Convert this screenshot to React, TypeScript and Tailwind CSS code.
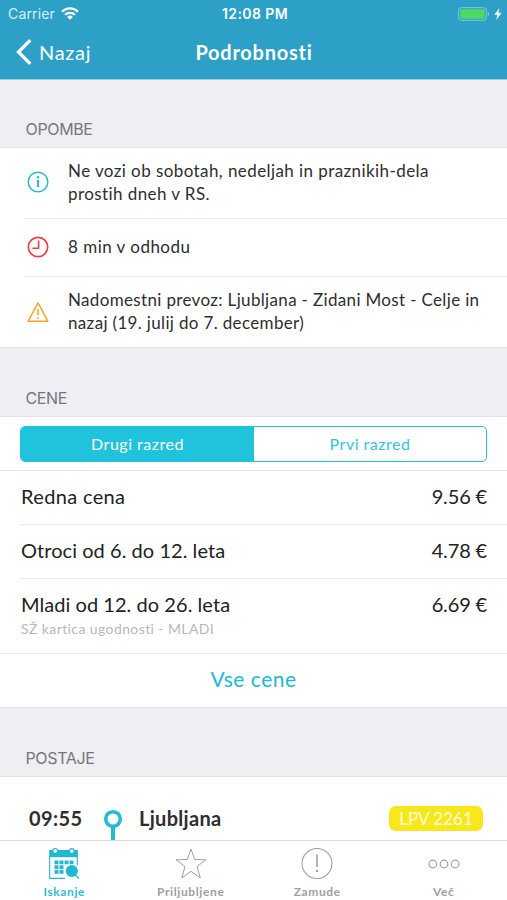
import type { ReactNode } from 'react';

interface Note {
  id: string;
  lines: string[];
  icon: ReactNode;
  className: string;
}

interface Price {
  label: string;
  amount: string;
  hint?: string;
  className: string;
}

interface Tab {
  label: string;
  icon: ReactNode;
  active?: boolean;
}

const InfoIcon = () => (
  <svg className="h-[22px] w-[22px]" viewBox="0 0 22 22" fill="none" stroke="#27bcd3" strokeWidth="1.5">
    <circle cx="11" cy="11" r="9.8" />
    <path d="M11 9v6.8" strokeWidth="2" />
    <path d="M9.6 9.4H11M9.6 15.5h2.8" strokeWidth="0.8" />
    <circle cx="11" cy="6.3" r="1.2" fill="#27bcd3" stroke="none" />
  </svg>
);

const DelayIcon = () => (
  <svg className="h-[22px] w-[22px]" viewBox="0 0 22 22" fill="none" stroke="#ee3f46" strokeWidth="1.7">
    <circle cx="11" cy="11" r="9.7" />
    <path d="M11.6 4.4v7.8H5.4" strokeWidth="1.6" />
  </svg>
);

const WarningIcon = () => (
  <svg className="mt-[2px] h-[22px] w-[22px]" viewBox="0 0 22 22" fill="none" stroke="#f2a52c" strokeWidth="1.5" strokeLinejoin="round">
    <path d="M11 1.8 20.8 20.2H1.2Z" />
    <path d="M11 8v6.2" strokeWidth="1.6" />
    <circle cx="11" cy="17" r="0.9" fill="#f2a52c" stroke="none" />
  </svg>
);

const CalendarIcon = () => (
  <svg className="h-[32px] w-[32px]" viewBox="0 0 32 32" fill="none">
    <path d="M1.7 9V30.4H17M29.3 9v8" stroke="#20b8d2" strokeWidth="1.1" />
    <path d="M1.2 2h28.6v7.2H1.2Z" fill="#20b8d2" />
    <circle cx="7.2" cy="3" r="2.4" fill="#fff" stroke="#20b8d2" strokeWidth="1.1" />
    <circle cx="23.8" cy="3" r="2.4" fill="#fff" stroke="#20b8d2" strokeWidth="1.1" />
    <path
      d="M6.5 12.5h4v3.7h-4zM11.5 12.5h4v3.7h-4zM16.5 12.5h4v3.7h-4zM21.5 12.5h4v3.7h-4zM6.5 17.3h4v3.7h-4zM11.5 17.3h4v3.7h-4zM6.5 22.1h4v3.7h-4zM11.5 22.1h4v3.7h-4z"
      fill="#20b8d2"
    />
    <circle cx="23.8" cy="23" r="6.8" fill="#fff" />
    <circle cx="23.8" cy="23" r="6.1" fill="#20b8d2" />
    <path d="m27.6 27.2 3.4 3.4" stroke="#20b8d2" strokeWidth="1.3" />
  </svg>
);

const StarIcon = () => (
  <svg className="h-[32px] w-[32px]" viewBox="0 0 32 32" fill="none" stroke="#a0a0a0" strokeWidth="1" strokeLinejoin="round">
    <path d="M16 1 19.7 11.5 30.9 11.8 22 18.6 25.3 30 16 23.3 6.7 30 10 18.6 1.1 11.8 12.3 11.5Z" />
  </svg>
);

const AlertIcon = () => (
  <svg className="h-[32px] w-[32px]" viewBox="0 0 32 32" fill="none" stroke="#a0a0a0" strokeWidth="1.1">
    <circle cx="16" cy="15.5" r="15" />
    <path d="M16 6.5v12.6" strokeWidth="1.6" />
    <circle cx="16" cy="23" r="1.2" fill="#a0a0a0" stroke="none" />
  </svg>
);

const MoreIcon = () => (
  <svg className="h-[32px] w-[32px]" viewBox="0 0 32 32" fill="none" stroke="#a0a0a0" strokeWidth="1.2">
    <circle cx="4.8" cy="16" r="3.8" />
    <circle cx="16" cy="16" r="3.8" />
    <circle cx="27.2" cy="16" r="3.8" />
  </svg>
);

const notes: Note[] = [
  {
    id: 'info',
    lines: ['Ne vozi ob sobotah, nedeljah in praznikih-dela', 'prostih dneh v RS.'],
    icon: <InfoIcon />,
    className: 'h-[71px] tracking-[0.42px]',
  },
  { id: 'delay', lines: ['8 min v odhodu'], icon: <DelayIcon />, className: 'h-[58px] tracking-[0.48px]' },
  {
    id: 'warning',
    lines: ['Nadomestni prevoz: Ljubljana - Zidani Most - Celje in', 'nazaj (19. julij do 7. december)'],
    icon: <WarningIcon />,
    className: 'h-[70px] tracking-[0.34px]',
  },
];

const prices: Price[] = [
  { label: 'Redna cena', amount: '9.56 €', className: 'tracking-[0.35px]' },
  { label: 'Otroci od 6. do 12. leta', amount: '4.78 €', className: 'tracking-[0.05px]' },
  { label: 'Mladi od 12. do 26. leta', amount: '6.69 €', hint: 'SŽ kartica ugodnosti - MLADI', className: 'tracking-[0.05px]' },
];

const tabs: Tab[] = [
  { label: 'Iskanje', icon: <CalendarIcon />, active: true },
  { label: 'Priljubljene', icon: <StarIcon /> },
  { label: 'Zamude', icon: <AlertIcon /> },
  { label: 'Več', icon: <MoreIcon /> },
];

const SectionTitle = ({ children, height = 'h-[69px]' }: { children: ReactNode; height?: string }) => (
  <h2
    className={`flex shrink-0 items-end border-b border-[#e2e2e6] bg-[#eeeef3] pb-[8px] pl-[25.5px] font-['Inter'] text-[16px] leading-[20px] tracking-[-0.35px] text-[#77777b] ${height}`}
  >
    {children}
  </h2>
);

const Header = () => (
  <header className="h-[80px] shrink-0 border-b border-[#8fd3e8] bg-[#2ca0c6] text-white">
    {/* Status bar */}
    <div className="grid h-[27px] grid-cols-3 items-center pr-[5px] pl-[8px] font-['Inter'] text-[14px]">
      <div className="flex items-center gap-[6px]">
        <span className="tracking-[0.15px] text-[#d8f0f8]">Carrier</span>
        <svg className="h-[13px] w-[18px]" viewBox="0 0 18 13" fill="none" stroke="#fff" strokeWidth="2.2">
          <path d="M1 4.7a11.4 11.4 0 0 1 16 0M4 7.8a7.2 7.2 0 0 1 10 0" />
          <path d="M9 12.8 6.1 9.9a4.1 4.1 0 0 1 5.8 0Z" fill="#fff" stroke="none" />
        </svg>
      </div>
      <span className="text-center text-[14px] font-semibold tracking-[0.4px]">12:08 PM</span>
      <div className="flex items-center justify-end gap-[4px]">
        <svg className="h-[14px] w-[32px]" viewBox="0 0 32 14" fill="none">
          <rect x="0.7" y="0.7" width="27.6" height="12.6" rx="2.6" stroke="#8ac9d9" />
          <rect x="2.3" y="2.2" width="24.4" height="9.6" rx="1" fill="#4cd964" />
          <path d="M29.8 5v4.4c1.8-.8 1.8-3.6 0-4.4Z" fill="#8ac9d9" />
        </svg>
        <svg className="h-[12px] w-[8px]" viewBox="0 0 8 12" fill="#fff">
          <path d="M5.4 0 .4 6.8h3L2.2 12l5.4-7.2H4.4Z" />
        </svg>
      </div>
    </div>
    {/* Navigation */}
    <div className="grid h-[50px] grid-cols-[1fr_auto_1fr] items-center pl-[16px]">
      <div className="flex items-center gap-[7px]">
        <svg className="h-[26px] w-[16px]" viewBox="0 0 16 26" fill="none" stroke="#fff" strokeWidth="3.3">
          <path d="M14.3 1.2 2.5 13l11.8 11.8" />
        </svg>
        <span className="text-[20px] tracking-[0.7px]">Nazaj</span>
      </div>
      <h1 className="pr-[15px] text-[20px] font-bold tracking-[0.75px]">Podrobnosti</h1>
    </div>
  </header>
);

const App = () => {
  return (
    <div className="flex h-[900px] w-[507px] flex-col overflow-hidden bg-white font-['Lato',sans-serif] text-[#2e2e2e]">
      <Header />

      {/* Notes */}
      <SectionTitle height="h-[68px]">OPOMBE</SectionTitle>
      <ul className="shrink-0 border-b border-[#dfdfe3] pl-[25px]">
        {notes.map((note) => (
          <li key={note.id} className={`flex items-center border-b border-[#e9e9eb] pb-[2px] pl-[2px] last:border-b-0 ${note.className}`}>
            {note.icon}
            <p className="ml-[19px] text-[17px] leading-[23px] whitespace-nowrap">
              {note.lines.map((line) => (
                <span key={line} className="block">{line}</span>
              ))}
            </p>
          </li>
        ))}
      </ul>

      {/* Prices */}
      <SectionTitle>CENE</SectionTitle>
      <div className="h-[54px] shrink-0 border-b border-[#e4e4e6] px-[20px] pt-[9px]">
        <div className="flex h-[36px] overflow-hidden rounded-[5px] border border-[#22c2da] text-[16px] tracking-[0.5px]">
          <button className="w-[233px] bg-[#20c3dc] pb-px text-white">Drugi razred</button>
          <button className="flex-1 pb-px text-[#38c3d8]">Prvi razred</button>
        </div>
      </div>
      <ul className="shrink-0 border-b border-[#e4e4e6] pl-[20px] text-[20px] leading-[26px] text-[#222]">
        {prices.map((price) => (
          <li key={price.label} className="border-b border-[#e9e9eb] pt-[12px] pr-[20px] pb-[15px] pl-px last:border-b-0 last:pb-[12px]">
            <div className="flex justify-between">
              <span className={price.className}>{price.label}</span>
              <span className="tracking-[-0.15px]">{price.amount}</span>
            </div>
            {price.hint && <p className="mt-px h-[23px] text-[14px] leading-[22px] tracking-[0.4px] text-[#b8b8b8]">{price.hint}</p>}
          </li>
        ))}
      </ul>
      <button className="h-[54px] shrink-0 border-b border-[#dfdfe3] pb-[3px] text-[21px] tracking-[0.5px] text-[#20bad2]">Vse cene</button>

      {/* Stops */}
      <SectionTitle>POSTAJE</SectionTitle>
      <div className="flex h-[63px] shrink-0 items-start pr-[24px] pl-[29px] text-[20px] font-bold">
        <span className="mt-[28px] w-[74px] leading-[26px] tracking-[0.4px]">09:55</span>
        <svg className="mt-[32px] h-[31px] w-[20px]" viewBox="0 0 20 31" fill="none" stroke="#20bbd4">
          <circle cx="10" cy="10" r="7.3" strokeWidth="3.6" />
          <path d="M10 17v14" strokeWidth="4" />
        </svg>
        <span className="mt-[28px] ml-[16px] leading-[26px] tracking-[0.3px]">Ljubljana</span>
        <span className="mt-[29px] ml-auto flex h-[25px] w-[94px] items-center justify-center rounded-[7px] bg-[#f7e71c] text-[17px] font-normal text-[#fffdd9]">
          LPV 2261
        </span>
      </div>

      {/* Tab bar */}
      <nav className="grid h-[60px] shrink-0 grid-cols-4 border-t border-[#dadadc] bg-white pl-px">
        {tabs.map((tab) => (
          <button
            key={tab.label}
            className={`flex flex-col items-center pt-[7px] text-[12px] leading-[16px] font-bold tracking-[0.6px] ${tab.active ? 'text-[#2fbdd5]' : 'text-[#a0a0a0]'}`}
          >
            {tab.icon}
            <span className="mt-[4px]">{tab.label}</span>
          </button>
        ))}
      </nav>
    </div>
  );
};

export default App;
